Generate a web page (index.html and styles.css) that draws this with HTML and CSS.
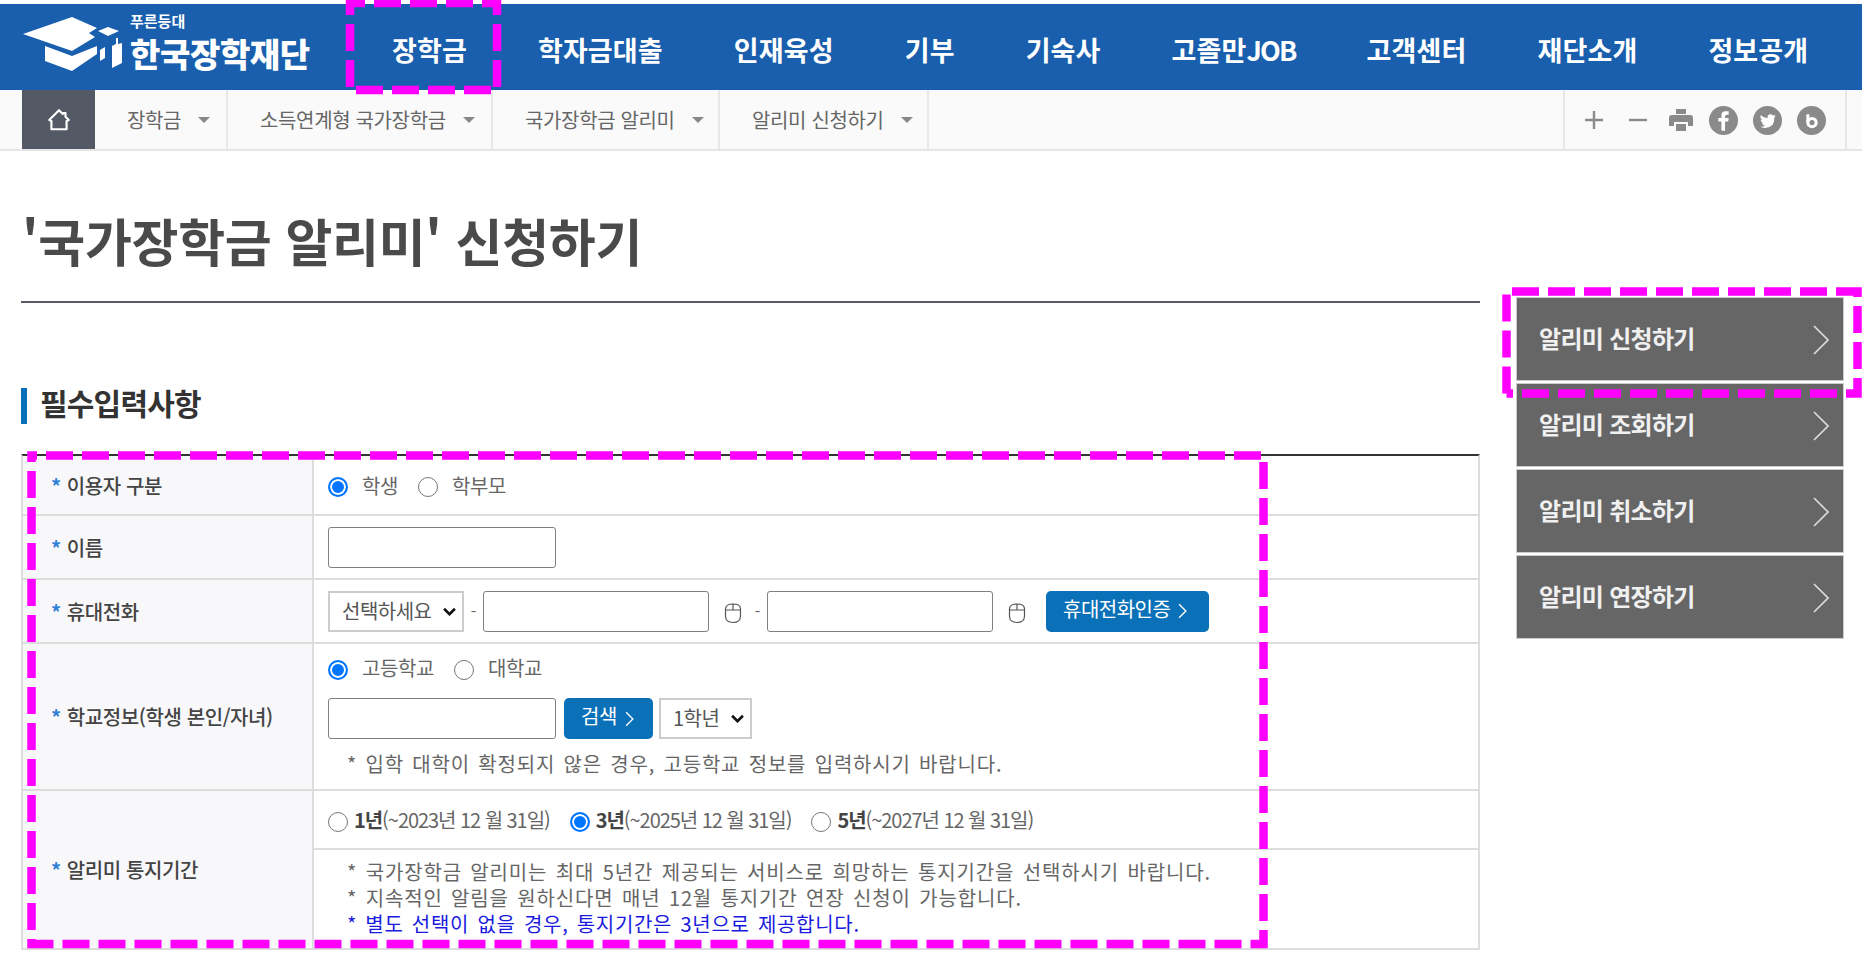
FILE: index.html
```html
<!DOCTYPE html>
<html lang="ko">
<head>
<meta charset="utf-8">
<title>국가장학금 알리미 신청하기</title>
<link rel="stylesheet" href="styles.css">
</head>
<body>
<header class="top">
  <a class="logo">
    <svg class="cap" viewBox="0 0 100 56" width="100" height="56">
      <path fill="#fff" d="M0 17 49 0 74 11 66 16 72 20 49 34Z"/>
      <path fill="#fff" d="M75 14 85 10 96 14 85 19Z"/>
      <path fill="#fff" d="M22 29 49 39 74 29V37L49 54 22 44Z"/>
      <path fill="#fff" d="M77 33 82 30V41L77 44Z"/>
      <path fill="#fff" d="M93 21H95V27L99 26V46L89 51V29L93 27Z"/>
    </svg>
    <span class="logo-text"><span class="logo-small">푸른등대</span><span class="logo-main">한국장학재단</span></span>
  </a>
  <nav class="gnb">
    <a>장학금</a><a>학자금대출</a><a>인재육성</a><a>기부</a><a>기숙사</a><a>고졸만<span class="job">JOB</span></a><a>고객센터</a><a>재단소개</a><a>정보공개</a>
  </nav>
</header>
<div class="crumbs">
  <a class="home"><svg viewBox="0 0 24 24" width="26" height="26"><path d="M12 3 15.500 6.500V5.500H18V9L21 12 19 13V20.500H5V13L3 12Z" fill="none" stroke="#fff" stroke-width="2" stroke-linejoin="round"/></svg></a>
  <a class="crumb c1">장학금<i></i></a>
  <a class="crumb c2">소득연계형 국가장학금<i></i></a>
  <a class="crumb c3">국가장학금 알리미<i></i></a>
  <a class="crumb c4">알리미 신청하기<i></i></a>
  <div class="tools">
    <svg class="t-plus" viewBox="0 0 20 20" width="20" height="20"><path d="M10 1V19M1 10H19" stroke="#8a8a8a" stroke-width="2.400"/></svg>
    <svg class="t-minus" viewBox="0 0 20 20" width="20" height="20"><path d="M1 10H19" stroke="#8a8a8a" stroke-width="2.400"/></svg>
    <svg class="t-print" viewBox="0 0 26 26" width="26" height="26"><path fill="#8a8a8a" d="M8 2H18V7H8ZM4 8H22Q25 8 25 11V19H20V15H6V19H1V11Q1 8 4 8ZM8 17H18V24H8Z"/></svg>
    <svg class="t-circle" viewBox="0 0 28 28" width="29" height="29"><circle cx="14" cy="14" r="14" fill="#8a8a8a"/><path fill="#fff" d="M12 24V15H9V11.500H12V9Q12 5 16 5H19V8.500H17Q15.500 8.500 15.500 10V11.500H19L18.500 15H15.500V24Z"/></svg>
    <svg class="t-circle" viewBox="0 0 28 28" width="29" height="29"><circle cx="14" cy="14" r="14" fill="#8a8a8a"/><path fill="#fff" d="M22 9.500Q21 10 20 10.200 21 9.500 21.500 8.300 20.500 9 19.300 9.200 18.300 8 16.800 8 14 8.300 14 11 14 11.500 14.100 11.800 10 11.600 7.500 8.700 6.500 11.500 8.800 13.500 8 13.500 7.300 13 7.300 15.500 10 16.500 9.200 16.700 8.500 16.500 9.300 18.500 11.500 18.800 9.500 20.400 7 20 14 23 19 18 21 15 20.500 11.500 21.500 10.600 22 9.500Z"/></svg>
    <svg class="t-circle" viewBox="0 0 28 28" width="29" height="29"><circle cx="14" cy="14" r="14" fill="#8a8a8a"/><path fill="none" stroke="#fff" stroke-width="3" d="M10.500 8V15.500"/><circle cx="14.500" cy="16" r="4" fill="none" stroke="#fff" stroke-width="3"/></svg>
  </div>
</div>
<main class="page">
  <section class="content">
    <h1 class="title">'국가장학금 알리미' 신청하기</h1>
    <h2 class="section">필수입력사항</h2>
    <div class="table">
      <div class="th r1"><b>*</b>이용자 구분</div>
      <div class="td r1 radios">
        <label><span class="radio on"></span>학생</label>
        <label><span class="radio"></span>학부모</label>
      </div>
      <div class="th r2"><b>*</b>이름</div>
      <div class="td r2"><span class="input"></span></div>
      <div class="th r3"><b>*</b>휴대전화</div>
      <div class="td r3 phone">
        <span class="select s-phone">선택하세요<svg class="caret" viewBox="0 0 12 8" width="13" height="9"><path d="M1 1.500 6 6.500 11 1.500" fill="none" stroke="#111" stroke-width="2.400"/></svg></span>
        <span class="dash">-</span>
        <span class="input"></span>
        <svg class="mouse" viewBox="0 0 18 22" width="18" height="22"><path d="M1.500 7Q1.500 2 9 2T16.500 7V14Q16.500 20.500 9 20.500T1.500 14ZM1.500 8H16.500M9 2V8" fill="none" stroke="#555" stroke-width="1.200"/></svg>
        <span class="dash">-</span>
        <span class="input"></span>
        <svg class="mouse" viewBox="0 0 18 22" width="18" height="22"><path d="M1.500 7Q1.500 2 9 2T16.500 7V14Q16.500 20.500 9 20.500T1.500 14ZM1.500 8H16.500M9 2V8" fill="none" stroke="#555" stroke-width="1.200"/></svg>
        <a class="btn">휴대전화인증<svg viewBox="0 0 8 14" width="9" height="16"><path d="M1 1 7 7 1 13" fill="none" stroke="#fff" stroke-width="1.200"/></svg></a>
      </div>
      <div class="th r4"><b>*</b>학교정보(학생 본인/자녀)</div>
      <div class="td r4 school">
        <div class="radios">
          <label><span class="radio on"></span>고등학교</label>
          <label><span class="radio"></span>대학교</label>
        </div>
        <div class="school-row">
          <span class="input"></span>
          <a class="btn">검색<svg viewBox="0 0 8 14" width="9" height="16"><path d="M1 1 7 7 1 13" fill="none" stroke="#fff" stroke-width="1.200"/></svg></a>
          <span class="select s-grade">1학년<svg class="caret" viewBox="0 0 12 8" width="13" height="9"><path d="M1 1.500 6 6.500 11 1.500" fill="none" stroke="#111" stroke-width="2.400"/></svg></span>
        </div>
        <p class="note">* 입학 대학이 확정되지 않은 경우, 고등학교 정보를 입력하시기 바랍니다.</p>
      </div>
      <div class="th r5"><b>*</b>알리미 통지기간</div>
      <div class="td r5a terms">
        <label><span class="radio"></span><strong>1년</strong>(~2023년 12 월 31일)</label>
        <label><span class="radio on"></span><strong>3년</strong>(~2025년 12 월 31일)</label>
        <label><span class="radio"></span><strong>5년</strong>(~2027년 12 월 31일)</label>
      </div>
      <div class="td r5b notes">
        <p>* 국가장학금 알리미는 최대 5년간 제공되는 서비스로 희망하는 통지기간을 선택하시기 바랍니다.</p>
        <p>* 지속적인 알림을 원하신다면 매년 12월 통지기간 연장 신청이 가능합니다.</p>
        <p class="blue">* 별도 선택이 없을 경우, 통지기간은 3년으로 제공합니다.</p>
      </div>
    </div>
  </section>
  <aside class="side">
    <a>알리미 신청하기<svg viewBox="0 0 16 30" width="16" height="30"><path d="M1 1 15 15 1 29" fill="none" stroke="#ddd" stroke-width="1.600"/></svg></a>
    <a>알리미 조회하기<svg viewBox="0 0 16 30" width="16" height="30"><path d="M1 1 15 15 1 29" fill="none" stroke="#ddd" stroke-width="1.600"/></svg></a>
    <a>알리미 취소하기<svg viewBox="0 0 16 30" width="16" height="30"><path d="M1 1 15 15 1 29" fill="none" stroke="#ddd" stroke-width="1.600"/></svg></a>
    <a>알리미 연장하기<svg viewBox="0 0 16 30" width="16" height="30"><path d="M1 1 15 15 1 29" fill="none" stroke="#ddd" stroke-width="1.600"/></svg></a>
  </aside>
</main>
<svg class="marks" viewBox="0 0 1862 967" width="1862" height="967">
  <rect class="m1" x="350" y="3" width="147" height="87"/>
  <path class="m2" d="M1506.500 291.500H1857.500V393.500H1506.500"/>
  <path d="M1506.500 393.500V291.500"/>
  <rect class="m3" x="31.500" y="455.500" width="1232" height="488.500"/>
</svg>
</body>
</html>
```

FILE: styles.css
```css
* { box-sizing: border-box; }
html, body { margin: 0; padding: 0; }
body {
  width: 1862px;
  height: 967px;
  overflow: hidden;
  background: #fff;
  color: #555;
  font-family: "Noto Sans CJK KR", "Noto Sans", sans-serif;
  font-size: 20px;
  position: relative;
}
a { color: inherit; text-decoration: none; }
p, h1, h2 { margin: 0; }

.top {
  margin-top: 4px;
  height: 86px;
  background: #195fad;
  display: flex;
  align-items: center;
  color: #fff;
}
.logo { display: flex; align-items: flex-start; align-self: flex-start; margin-left: 23px; padding-top: 9px; width: 369px; gap: 8px; }
.cap { flex: none; margin-top: 4px; }
.logo-text { display: flex; flex-direction: column; line-height: 1; margin-left: -1px; }
.logo-small { font-size: 15px; font-weight: 700; margin-bottom: 9px; }
.logo-main { font-size: 33px; font-weight: 900; letter-spacing: -0.400px; white-space: nowrap; }
.gnb { display: flex; gap: 71px; font-size: 27px; font-weight: 700; letter-spacing: 0.130px; white-space: nowrap; padding-top: 4px; }
.job { letter-spacing: -1.800px; }

.crumbs {
  height: 61px;
  background: #fafafa;
  border-bottom: 2px solid #e6e6e6;
  display: flex;
  padding-left: 22px;
  font-size: 20px;
  color: #666;
  letter-spacing: -0.350px;
}
.home { width: 73px; background: #535a66; display: flex; align-items: center; justify-content: center; }
.crumb { display: flex; align-items: center; border-right: 2px solid #e8e8e8; white-space: nowrap; padding-left: 32px; position: relative; }
.crumb i { width: 0; height: 0; border: 6px solid transparent; border-top: 6px solid #888; border-bottom: 0; margin-left: 17px; }
.c1 { width: 133px; }
.c2 { width: 265px; }
.c3 { width: 227px; }
.c4 { width: 209px; }
.tools {
  margin-left: auto;
  width: 284px;
  margin-right: 15px;
  border-left: 2px solid #e8e8e8;
  border-right: 2px solid #e8e8e8;
  display: flex;
  align-items: center;
  padding: 1px 0 0 19px;
}
.t-minus { margin-left: 24px; }
.t-print { margin-left: 20px; }
.t-circle { margin-left: 15px; }

.page {
  display: grid;
  grid-template-columns: 1459px 328px;
  column-gap: 36px;
  padding-left: 21px;
}
.title {
  font-size: 51px;
  font-weight: 700;
  color: #4a4a4a;
  height: 152px;
  padding-top: 54px;
  padding-left: 1px;
  line-height: 70px;
  border-bottom: 2px solid #5a5a6a;
  letter-spacing: -0.300px;
}
.section {
  margin-top: 85px;
  height: 36px;
  border-left: 6px solid #0a71b8;
  padding-left: 13px;
  font-size: 30px;
  font-weight: 700;
  color: #333;
  line-height: 29px;
  letter-spacing: -0.800px;
}
.table {
  margin-top: 30px;
  display: grid;
  grid-template-columns: 291px 1fr;
  grid-template-rows: 60px 64px 64px 147px 59px 98px;
  border-top: 2px solid #333;
  border-left: 2px solid #ddd;
  border-right: 2px solid #ddd;
  border-bottom: 2px solid #ddd;
  width: 1459px;
}
.th {
  background: #f8f8fa;
  border-right: 2px solid #ddd;
  border-bottom: 2px solid #ddd;
  display: flex;
  align-items: center;
  padding-left: 28px;
  font-size: 20px;
  font-weight: 500;
  color: #444;
  letter-spacing: -0.400px;
}
.th b { color: #2f7fd6; margin-right: 6px; }
.td {
  border-bottom: 2px solid #ddd;
  padding-left: 14px;
  display: flex;
  align-items: center;
}
.r5 { grid-row: 5 / span 2; grid-column: 1; border-bottom: 0; }
.r5b { grid-column: 2; border-bottom: 0; }
.radios { display: flex; gap: 20px; font-size: 20px; letter-spacing: -0.400px; color: #666; }
.radios label { display: flex; align-items: center; gap: 14px; }
.radio {
  width: 20px;
  height: 20px;
  border-radius: 50%;
  border: 1.500px solid #777;
  background: #fff;
  flex: none;
  position: relative;
  top: 2px;
}
.radio.on { border: 2px solid #0075ff; box-shadow: inset 0 0 0 2px #fff; background: #0075ff; }
.input {
  width: 228px;
  height: 41px;
  border: 1.500px solid #808080;
  border-radius: 3px;
  background: #fff;
  flex: none;
}
.phone .input { width: 226px; }
.select {
  display: flex;
  align-items: center;
  justify-content: space-between;
  height: 41px;
  border: 2px solid #ccc;
  background: #fff;
  padding: 0 6px 2px 12px;
  font-size: 20px;
  color: #555;
  letter-spacing: -0.500px;
  flex: none;
}
.caret { margin-top: 2px; }
.s-phone { width: 136px; }
.s-grade { width: 93px; }
.dash { width: 19px; text-align: center; font-size: 16px; color: #666; flex: none; }
.mouse { margin: 4px 6px 0 15px; flex: none; }
.btn {
  display: inline-flex;
  align-items: center;
  justify-content: flex-start;
  gap: 8px;
  height: 41px;
  padding: 0 0 6px 17px;
  background: #0a71b8;
  border-radius: 5px;
  color: #fff;
  font-size: 20px;
  letter-spacing: -0.500px;
  flex: none;
}
.btn svg { margin-top: 6px; }
.phone .btn { margin-left: 14px; width: 163px; }
.school { flex-direction: column; align-items: flex-start; justify-content: flex-start; padding-top: 9px; }
.school-row { display: flex; gap: 8px; margin-top: 16px; }
.school-row .btn { width: 89px; }
.school-row .select { margin-left: -2px; }
.note { margin-top: 13px; margin-left: 19px; font-size: 20px; color: #666; letter-spacing: 0.800px; word-spacing: 2px; line-height: 24px; white-space: nowrap; }
.terms { gap: 20px; font-size: 20px; letter-spacing: -1.050px; color: #666; }
.terms label { display: flex; align-items: center; gap: 6px; }
.terms strong { color: #444; margin-right: -6px; }
.notes { flex-direction: column; align-items: flex-start; justify-content: center; padding: 0 0 3px 33px; font-size: 20px; line-height: 26px; color: #666; letter-spacing: 0.850px; word-spacing: 2px; white-space: nowrap; }
.blue { color: #1a1adf; letter-spacing: 0.700px; }

.side { padding-top: 146px; display: flex; flex-direction: column; gap: 2px; }
.side a {
  height: 84px;
  background: #666;
  border: 1px solid #ccc;
  display: flex;
  align-items: center;
  justify-content: space-between;
  padding: 0 14px 4px 22px;
  color: #f0f0f0;
  font-size: 24px;
  font-weight: 700;
  letter-spacing: -0.700px;
}
.side svg { margin-top: 5px; }

.marks { position: absolute; left: 0; top: 0; pointer-events: none; }
.marks rect, .marks path { fill: none; stroke: #ff00ff; stroke-width: 8.500; stroke-dasharray: 27 9; }
.marks .m1 { stroke-dashoffset: 12; }
.marks .m2 { stroke-dashoffset: 30.500; }
.marks .m3 { stroke-dashoffset: 21.500; }
```
